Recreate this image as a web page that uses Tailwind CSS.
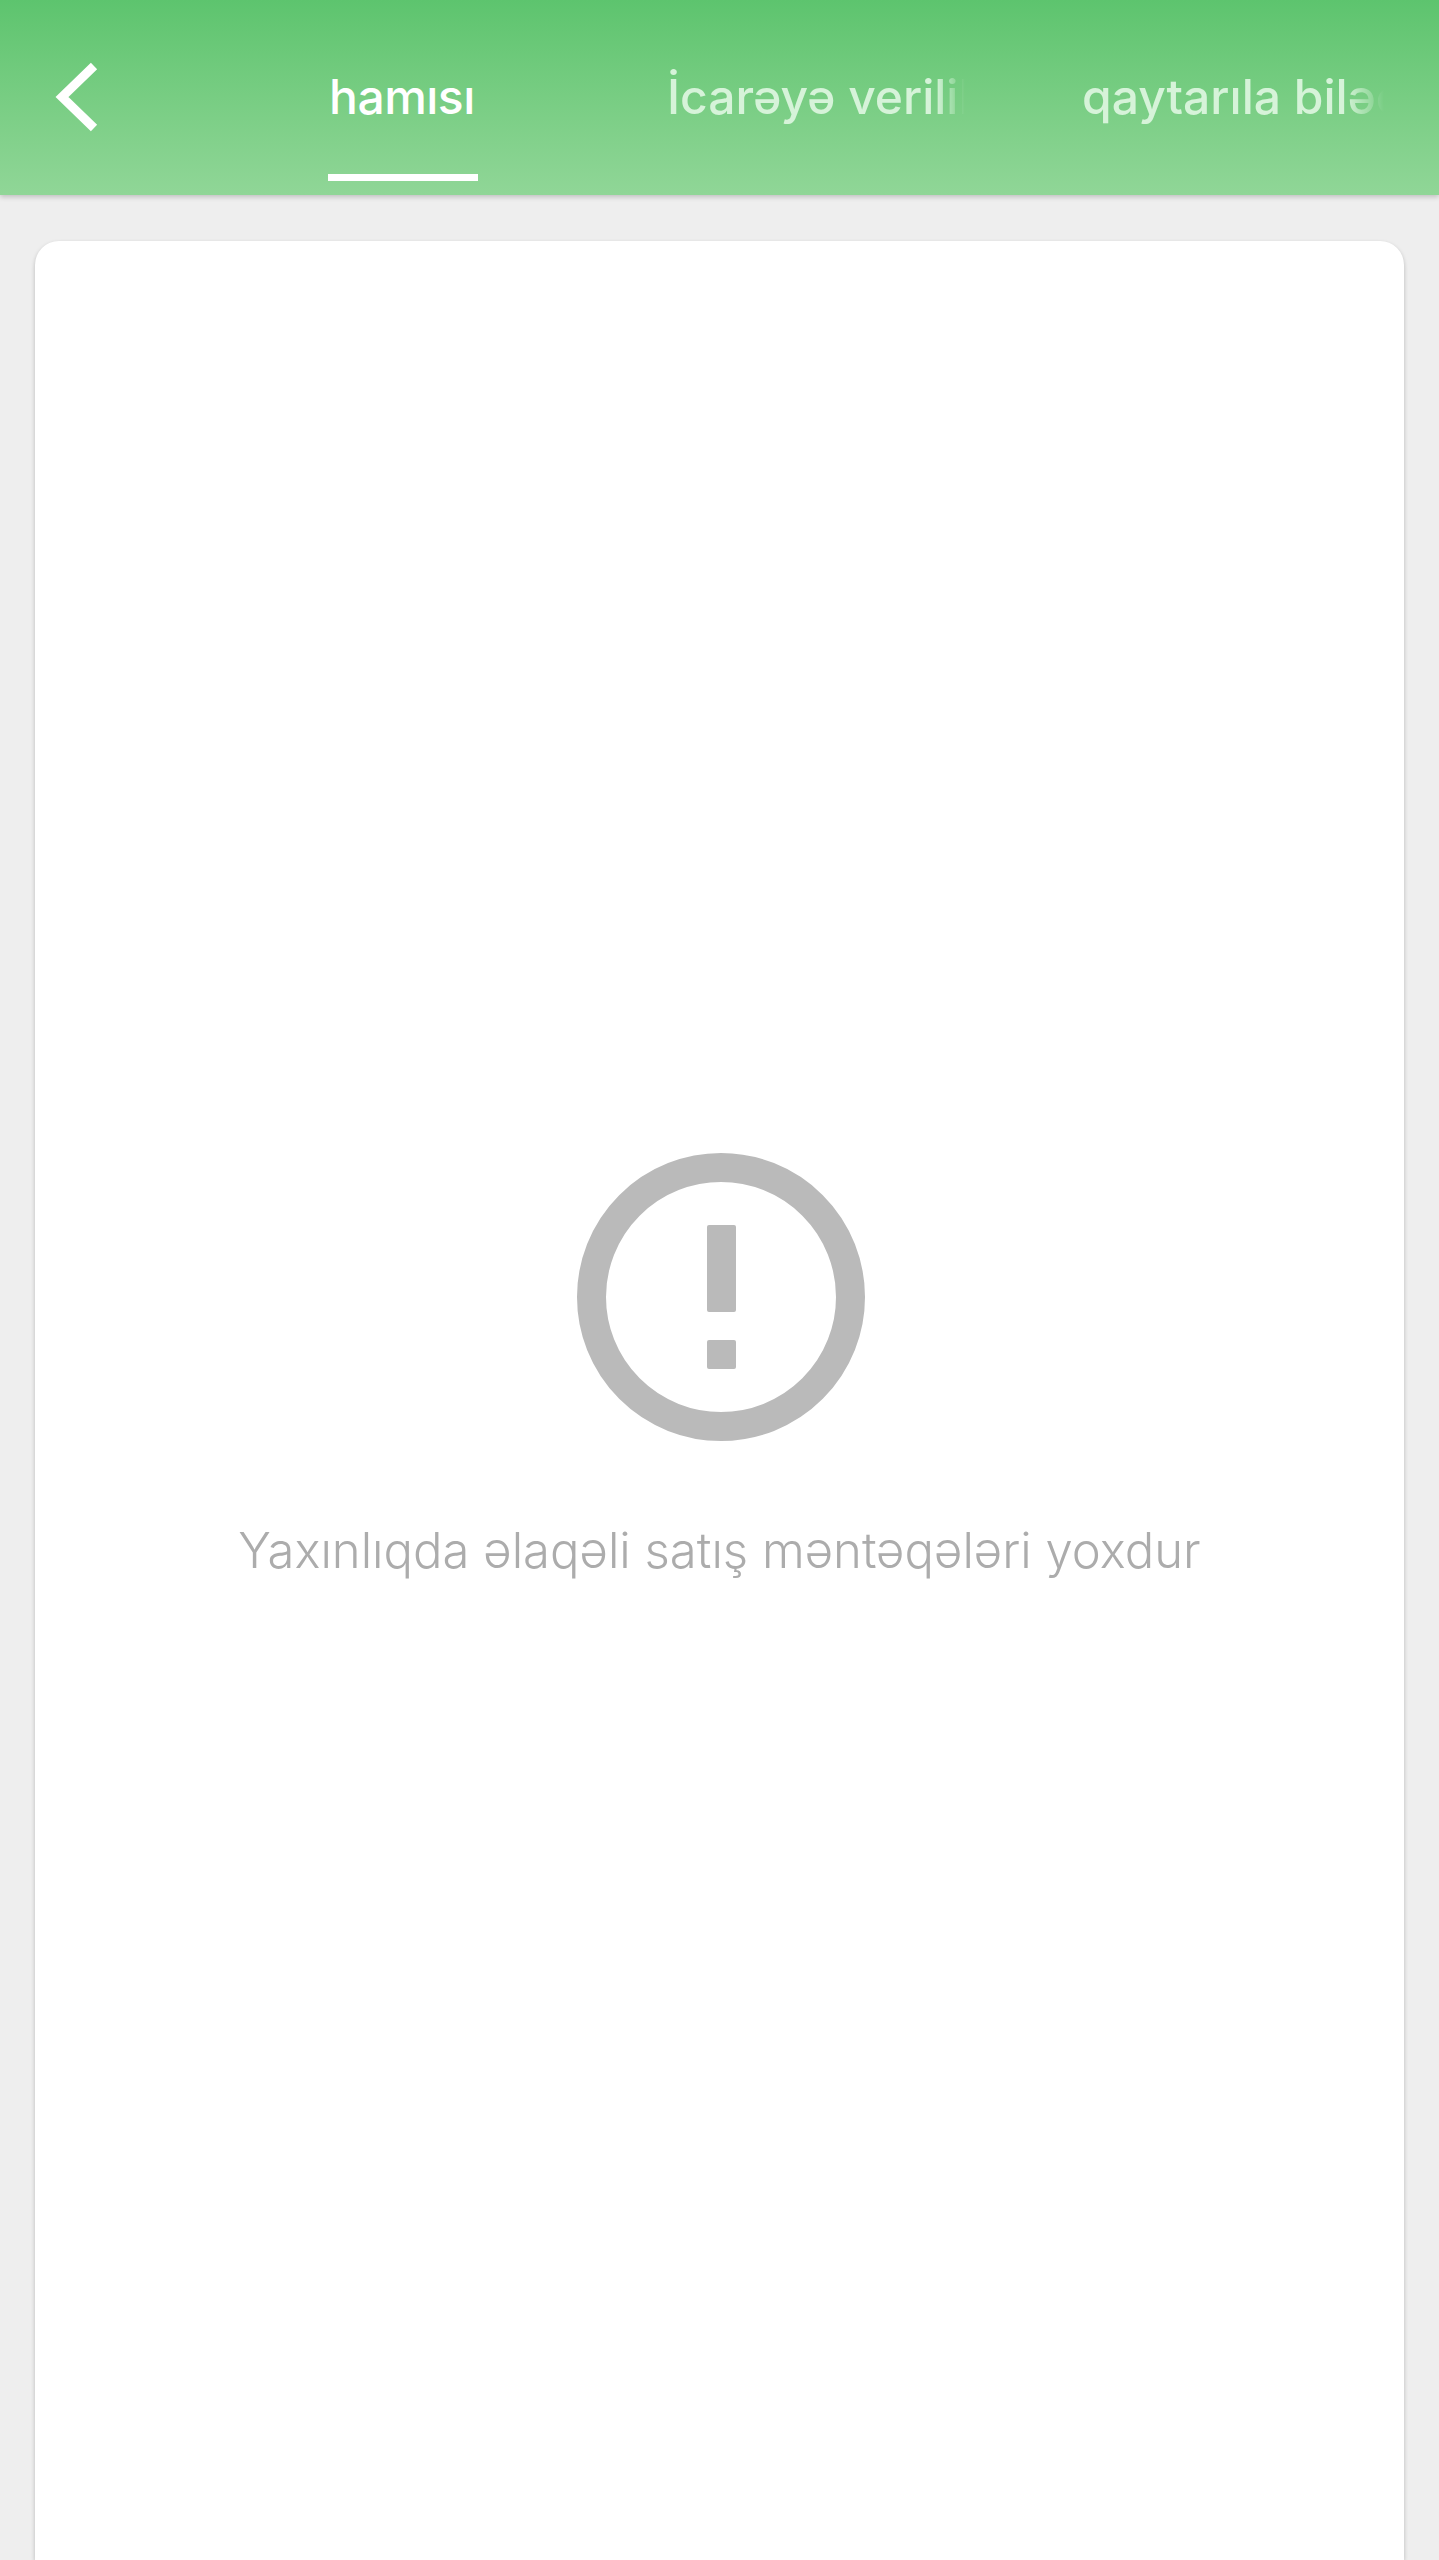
<!DOCTYPE html>
<html lang="az">
  <head>
    <meta charset="UTF-8" />
    <meta name="viewport" content="width=device-width, initial-scale=1.0" />
    <title>Satış məntəqələri</title>
    <script src="https://cdn.jsdelivr.net/npm/@tailwindcss/browser@4"></script>
  </head>
  <body class="bg-[#eeeeee] h-[2560px] overflow-hidden flex flex-col font-['Inter',sans-serif]">
    <!-- top bar -->
    <div class="h-[195px] shrink-0 flex bg-gradient-to-b from-[#5dc46e] to-[#90d697] shadow-[0_2px_5px_rgba(0,0,0,0.2)] relative z-10">
      <a href="#" class="w-[328px] shrink-0 pl-[55px] pt-[62px]">
        <svg class="w-[44px] h-[70px]" viewBox="0 0 44 70" fill="none" stroke="#ffffff" stroke-width="9" stroke-linejoin="miter">
          <path d="M39 4L7 35L39 66" />
        </svg>
      </a>
      <!-- tabs -->
      <div class="flex-1 flex text-[48px] leading-[54px] font-medium whitespace-nowrap">
        <div class="w-[150px] h-full pt-[70px] relative text-white">
          <span class="block pl-[1px] tracking-[-0.5px]">hamısı</span>
          <div class="absolute left-0 right-0 top-[174px] h-[7px] bg-white"></div>
        </div>
        <div class="w-[298px] ml-[189px] pt-[70px] overflow-hidden text-[#d6f3d9] [mask-image:linear-gradient(to_right,black_90%,transparent_100%)]">İcarəyə verilib</div>
        <div class="w-[302px] ml-[117px] pt-[70px] overflow-hidden text-[#d6f3d9] [mask-image:linear-gradient(to_right,black_87%,transparent_100%)]">qaytarıla biləcək</div>
      </div>
    </div>

    <!-- content card -->
    <div class="flex-1 mx-[35px] mt-[46px] bg-white rounded-t-[24px] shadow-[0_2px_4px_rgba(0,0,0,0.22)] flex flex-col items-center pt-[912px]">
      <svg class="w-[288px] h-[288px] ml-[2px]" viewBox="0 0 288 288" fill="#bababa">
        <circle cx="144" cy="144" r="129.5" fill="none" stroke="#bababa" stroke-width="29" />
        <rect x="130" y="72" width="29" height="87" rx="2" />
        <rect x="130" y="187" width="29" height="29" rx="2" />
      </svg>
      <p class="mt-[83px] text-[49px] leading-[54px] font-[350] text-[#acacac] whitespace-nowrap">Yaxınlıqda əlaqəli satış məntəqələri yoxdur</p>
    </div>
  </body>
</html>
